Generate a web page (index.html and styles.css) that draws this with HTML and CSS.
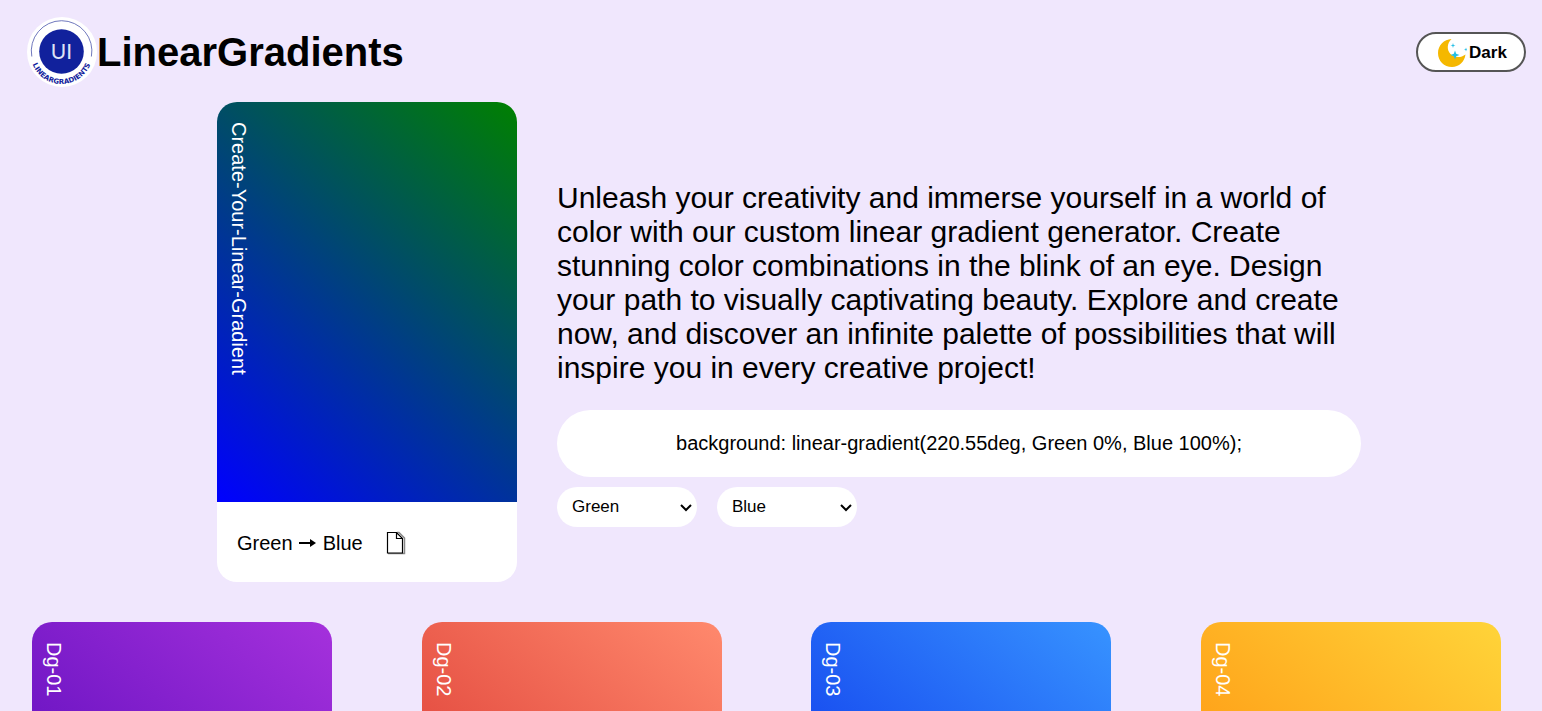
FILE: index.html
```html
<!DOCTYPE html>
<html lang="en">
<head>
<meta charset="utf-8">
<title>LinearGradients</title>
<link rel="stylesheet" href="styles.css">
</head>
<body>
<header class="header">
  <div class="brand">
    <svg class="logo" viewBox="0 0 70 70" aria-hidden="true">
      <defs><path id="ring-text" d="M3.5 36A31 31 0 0 0 65.500 36"/></defs>
      <circle cx="35" cy="35" r="35" fill="#fff"/>
      <path d="M4.800 39.500A30.300 30.300 0 1 1 64.400 39.500" fill="none" stroke="#4b56ac" stroke-width=".8"/>
      <circle cx="34.500" cy="34.500" r="22.300" fill="#11219c"/>
      <text class="logo-ui" x="34.500" y="42" text-anchor="middle">UI</text>
      <text class="logo-ring"><textPath href="#ring-text" startOffset="50%" text-anchor="middle">LINEARGRADIENTS</textPath></text>
    </svg>
    <h1 class="brand-name">LinearGradients</h1>
  </div>
  <button class="theme-button" type="button">
    <svg class="moon" viewBox="0 0 30 30" aria-hidden="true">
      <path d="M14.5 1C10 5 9.500 12 13.500 16C17.500 20 24 20 28.500 16.500C27.500 24 22 29 15 29C7 29 1 23 1 15C1 7.500 7 1.300 14.500 1Z" fill="#f5b800"/>
      <path d="M18 12.500L19.200 15.800L22.500 17L19.200 18.200L18 21.500L16.800 18.200L13.500 17L16.800 15.800ZM16 5L16.600 6.900L18.500 7.500L16.600 8.100L16 10L15.400 8.100L13.500 7.500L15.400 6.900ZM29 9.500L29.500 11L30 11.500L29.500 12L29 13.500L28.500 12L27 11.500L28.500 11Z" fill="#25bfe6"/>
    </svg>
    <span>Dark</span>
  </button>
</header>

<main>
  <section class="hero">
    <article class="card">
      <div class="swatch swatch-custom"><span class="swatch-name">Create-Your-Linear-Gradient</span></div>
      <div class="card-footer">
        <span class="color-pair">Green
          <svg class="arrow" viewBox="0 0 19 10" aria-hidden="true"><path d="M1 4H12V1L18 5L12 9V6H1Z" fill="#000"/></svg>
          Blue</span>
        <button class="copy-button" type="button" aria-label="Copy gradient">
          <svg class="page-icon" viewBox="0 0 20 24" aria-hidden="true">
            <path d="M11 1.500H13L18.500 7V22.500H2" fill="none" stroke="#888" stroke-width="1.500"/>
            <path d="M1.500 1.500H10.500L16.500 7.500V22H1.500ZM10.500 1.500V7.500H16.500" fill="#fff" stroke="#000" stroke-width="1.200"/>
          </svg>
        </button>
      </div>
    </article>
    <div class="generator">
      <p class="intro">Unleash your creativity and immerse yourself in a world of color with our custom linear gradient generator. Create stunning color combinations in the blink of an eye. Design your path to visually captivating beauty. Explore and create now, and discover an infinite palette of possibilities that will inspire you in every creative project!</p>
      <div class="code">background: linear-gradient(220.55deg, Green 0%, Blue 100%);</div>
      <div class="pickers">
        <select class="picker" aria-label="First color"><option>Green</option><option>Blue</option></select>
        <select class="picker" aria-label="Second color"><option>Blue</option><option>Green</option></select>
      </div>
    </div>
  </section>

  <section class="gallery">
    <article class="card"><div class="swatch swatch-01"><span class="swatch-name">Dg-01</span></div></article>
    <article class="card"><div class="swatch swatch-02"><span class="swatch-name">Dg-02</span></div></article>
    <article class="card"><div class="swatch swatch-03"><span class="swatch-name">Dg-03</span></div></article>
    <article class="card"><div class="swatch swatch-04"><span class="swatch-name">Dg-04</span></div></article>
  </section>
</main>
</body>
</html>
```
FILE: styles.css
```css
* {
  box-sizing: border-box;
}

body {
  margin: 0;
  height: 100vh;
  overflow: hidden;
  background: #f0e7fd;
  color: #000;
  font-family: "Liberation Sans", Arial, sans-serif;
  font-size: 20px;
}

.header {
  display: flex;
  justify-content: space-between;
  align-items: center;
  padding: 17px 16px 15px 27px;
}

.brand {
  display: flex;
  align-items: center;
}

.logo {
  width: 70px;
  height: 70px;
}

.logo-ui {
  font: 400 21px Lato, sans-serif;
  fill: #dfe2f5;
}

.logo-ring {
  font: 700 7px "DejaVu Sans", sans-serif;
  fill: #11219c;
}

.brand-name {
  margin: 0;
  font-size: 40px;
  line-height: 46px;
}

.theme-button {
  display: flex;
  justify-content: center;
  align-items: center;
  width: 110px;
  height: 40px;
  padding: 2px 0 0 2px;
  border: 2px solid #555;
  border-radius: 20px;
  background: #fff;
  color: #000;
  font: bold 17px "Liberation Sans", Arial, sans-serif;
}

.moon {
  width: 30px;
  height: 30px;
  margin-right: 2px;
}

.hero {
  display: flex;
  align-items: center;
  gap: 40px;
  padding: 0 32px 0 217px;
}

.card {
  flex: none;
  width: 300px;
  overflow: hidden;
  border-radius: 20px;
  background: #fff;
}

.swatch {
  height: 400px;
  padding: 20px 10px;
  color: #fff;
}

.swatch-name {
  display: block;
  line-height: 23px;
  writing-mode: vertical-rl;
}

.swatch-custom { background: linear-gradient(220.55deg, green 0%, blue 100%); }
.swatch-01 { background: linear-gradient(220.55deg, #a531dc 0%, #4300b1 100%); }
.swatch-02 { background: linear-gradient(220.55deg, #ff896d 0%, #d02020 100%); }
.swatch-03 { background: linear-gradient(220.55deg, #3793ff 0%, #0017e4 100%); }
.swatch-04 { background: linear-gradient(220.55deg, #ffd439 0%, #ff7a00 100%); }

.card-footer {
  display: flex;
  align-items: center;
  gap: 23px;
  height: 80px;
  padding: 2px 20px 0;
}

.arrow {
  width: 19px;
  height: 10px;
  vertical-align: 2px;
}

.copy-button {
  display: flex;
  padding: 0;
  border: 0;
  background: none;
}

.page-icon {
  width: 20px;
  height: 24px;
}

.generator {
  flex: 1;
  max-width: 804px;
  padding-top: 24px;
}

.intro {
  margin: 0 0 25px;
  font-size: 30px;
  line-height: 34px;
}

.code {
  padding: 22px;
  border-radius: 34px;
  background: #fff;
  line-height: 23px;
  text-align: center;
}

.pickers {
  display: flex;
  gap: 20px;
  margin-top: 10px;
}

.picker {
  width: 140px;
  height: 40px;
  padding: 0 24px 2px 15px;
  border: 0;
  border-radius: 20px;
  appearance: none;
  background: #fff url("data:image/svg+xml,%3Csvg xmlns='http://www.w3.org/2000/svg' width='12' height='8'%3E%3Cpath d='M1 1L6 6L11 1' fill='none' stroke='%23000' stroke-width='2'/%3E%3C/svg%3E") no-repeat right 5px top 17px;
  color: #000;
  font: 17px "Liberation Sans", Arial, sans-serif;
}

.gallery {
  display: flex;
  justify-content: space-between;
  padding: 40px 41px 40px 32px;
}
```
